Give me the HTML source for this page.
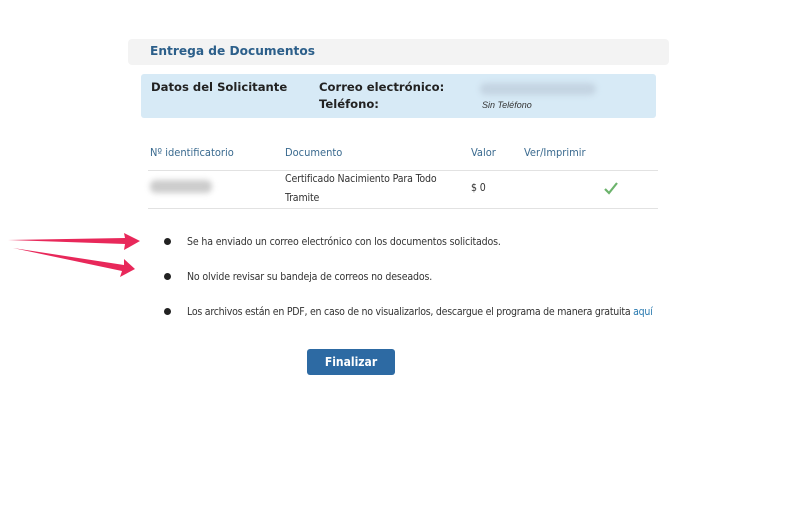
<!DOCTYPE html>
<html><head><meta charset="utf-8"><style>
body{margin:0;width:800px;height:507px;background:#fff;position:relative;font-family:"DejaVu Sans Condensed","Liberation Sans Narrow","Liberation Sans",sans-serif;overflow:hidden}
.a{position:absolute;white-space:nowrap}
.b{font-family:"DejaVu Sans","Liberation Sans",sans-serif;font-weight:bold}
.h{color:#3a6a8f;font-size:11px}
.t{color:#333;font-size:10.5px;letter-spacing:-0.15px}
.dot{position:absolute;width:7px;height:7px;border-radius:50%;background:#222}
</style></head><body>
<div class="a" style="left:128px;top:39px;width:541px;height:26px;background:#f3f3f3;border-radius:4px"></div>
<div class="a b" style="left:150px;top:44px;font-size:12.2px;color:#2c5f8a">Entrega de Documentos</div>
<div class="a" style="left:141px;top:74px;width:515px;height:44px;background:#d7eaf6;border-radius:3px"></div>
<div class="a b" style="left:151px;top:80px;font-size:11.6px;color:#222">Datos del Solicitante</div>
<div class="a b" style="left:319px;top:80px;font-size:11.6px;color:#222">Correo electrónico:</div>
<div class="a b" style="left:319px;top:97px;font-size:11.6px;color:#222">Teléfono:</div>
<div class="a" style="left:480px;top:83px;width:116px;height:12px;background:#c4d4e2;border-radius:6px;filter:blur(3px)"></div>
<div class="a" style="left:482px;top:100px;font-size:9px;font-style:italic;color:#333;font-family:'Liberation Sans',sans-serif">Sin Teléfono</div>
<div class="a h" style="left:150px;top:146px">Nº identificatorio</div>
<div class="a h" style="left:285px;top:146px">Documento</div>
<div class="a h" style="left:471px;top:146px">Valor</div>
<div class="a h" style="left:524px;top:146px">Ver/Imprimir</div>
<div class="a" style="left:148px;top:170px;width:510px;height:1px;background:#e2e2e2"></div>
<div class="a" style="left:148px;top:208px;width:510px;height:1px;background:#e2e2e2"></div>
<div class="a" style="left:150px;top:180px;width:62px;height:13px;background:#ccc;border-radius:6px;filter:blur(3px)"></div>
<div class="a t" style="left:285px;top:170px;line-height:19px">Certificado Nacimiento Para Todo<br>Tramite</div>
<div class="a t" style="left:471px;top:182px">$ 0</div>
<svg class="a" style="left:603px;top:180px" width="16" height="16"><path d="M2 9 L6 13 L14 3" stroke="#6cb36c" stroke-width="2.2" fill="none"/></svg>
<div class="dot" style="left:164px;top:238px"></div>
<div class="a t" style="left:187px;top:236px">Se ha enviado un correo electrónico con los documentos solicitados.</div>
<div class="dot" style="left:164px;top:273px"></div>
<div class="a t" style="left:187px;top:271px">No olvide revisar su bandeja de correos no deseados.</div>
<div class="dot" style="left:164px;top:308px"></div>
<div class="a t" style="left:187px;top:306px;letter-spacing:-0.25px">Los archivos están en PDF, en caso de no visualizarlos, descargue el programa de manera gratuita <span style="color:#2a7ab0">aquí</span></div>
<div class="a b" style="left:307px;top:349px;width:88px;height:26px;background:#2d6aa3;border-radius:3px;color:#fff;font-size:12px;text-align:center;line-height:26px;font-family:'DejaVu Sans Condensed',sans-serif">Finalizar</div>
<svg class="a" style="left:0;top:225px" width="150" height="60">
<polygon points="8,15 125,13 124,8 140,16 124,25 125,19" fill="#e8285a"/>
<polygon points="13,23 124,40 124,34 135,44 120,52 122,46" fill="#e8285a"/>
</svg>
</body></html>
